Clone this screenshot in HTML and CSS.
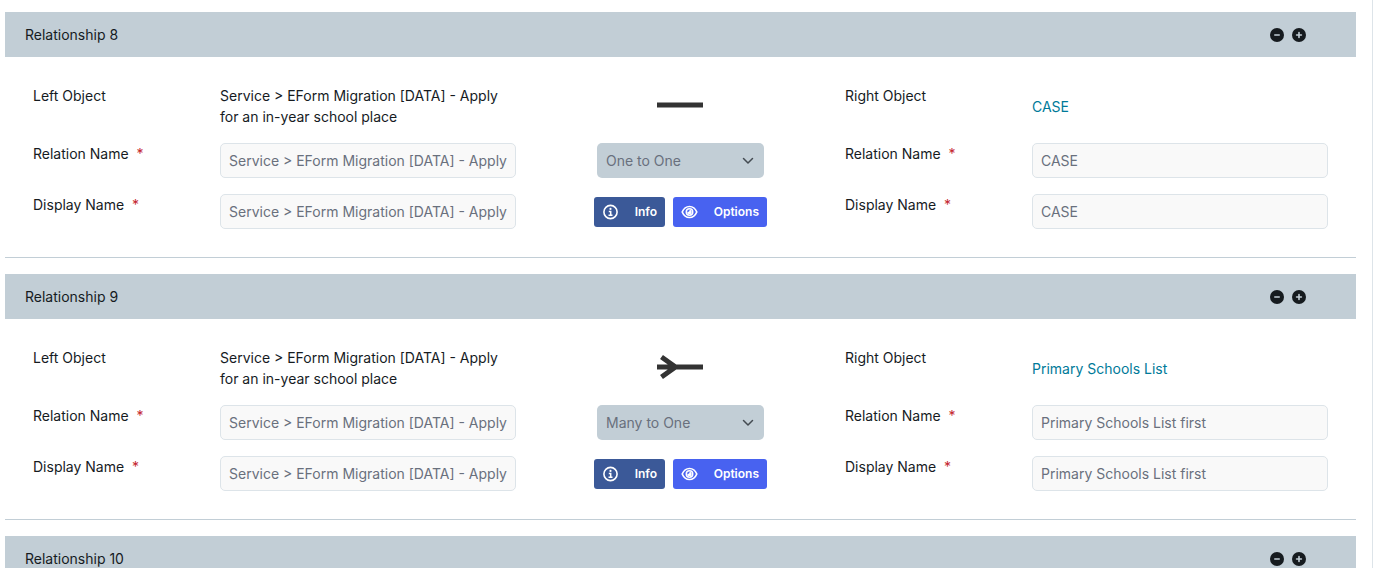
FILE: index.html
```
<!DOCTYPE html>
<html lang="en">
<head>
<meta charset="utf-8">
<title>Relationships</title>
<link rel="stylesheet" href="styles.css">
</head>
<body>
<svg class="sprite" aria-hidden="true">
  <symbol id="minus" viewBox="0 0 14 14"><circle cx="7" cy="7" r="7" fill="currentColor"/><path d="M4.8 7h4.4" stroke="#c2ced6" stroke-width="1.6" stroke-linecap="round"/></symbol>
  <symbol id="plus" viewBox="0 0 14 14"><circle cx="7" cy="7" r="7" fill="currentColor"/><path d="M4.6 7h4.8M7 4.6v4.8" stroke="#c2ced6" stroke-width="1.6" stroke-linecap="round"/></symbol>
  <symbol id="info" viewBox="0 0 16 16"><circle cx="8" cy="8" r="6.6" fill="none" stroke="currentColor" stroke-width="1.6"/><circle cx="8" cy="4.9" r="1.1" fill="currentColor"/><path d="M6.3 7.6h1.9v3.6M6 11.2h4" fill="none" stroke="currentColor" stroke-width="1.5"/></symbol>
  <symbol id="eye" viewBox="0 0 17 16"><path d="M1.200 8C2.700 4.500 5.300 2.500 8.500 2.500S14.300 4.500 15.800 8c-1.500 3.500-4.100 5.500-7.300 5.500S2.700 11.500 1.200 8z" fill="none" stroke="currentColor" stroke-width="1.700" stroke-linejoin="round"/><circle cx="8.500" cy="8" r="3.200" fill="none" stroke="currentColor" stroke-width="1.600"/><path d="M8.500 5.800A2.200 2.200 0 1 1 6.300 8C7.700 8.300 8.800 7.300 8.500 5.800z" fill="currentColor"/></symbol>
</svg>
<main class="panel">
  <section class="relationship">
    <header class="bar">
      <h2 class="title">Relationship 8</h2>
      <button class="toggle" type="button" aria-label="Collapse"><svg class="dot"><use href="#minus"/></svg></button>
      <button class="toggle" type="button" aria-label="Expand"><svg class="dot"><use href="#plus"/></svg></button>
    </header>
    <div class="fields">
      <span>Left Object</span>
      <span>Service &gt; EForm Migration [DATA] - Apply for an in-year school place</span>
      <svg class="link-shape" viewBox="0 0 48 28"><path d="M0 13h46"/></svg>
      <span>Right Object</span>
      <a class="object-link" href="#case">CASE</a>

      <label for="l-rel-8">Relation Name <span class="required">*</span></label>
      <input class="text" id="l-rel-8" value="Service &gt; EForm Migration [DATA] - Apply for an in-year school place">
      <select class="kind" aria-label="Relationship type"><option>One to One</option><option>Many to One</option></select>
      <label for="r-rel-8">Relation Name <span class="required">*</span></label>
      <input class="text" id="r-rel-8" value="CASE">

      <label for="l-dis-8">Display Name <span class="required">*</span></label>
      <input class="text" id="l-dis-8" value="Service &gt; EForm Migration [DATA] - Apply for an in-year school place">
      <div class="actions">
        <button class="action info" type="button"><svg class="icon"><use href="#info"/></svg>Info</button>
        <button class="action options" type="button"><svg class="icon"><use href="#eye"/></svg>Options</button>
      </div>
      <label for="r-dis-8">Display Name <span class="required">*</span></label>
      <input class="text" id="r-dis-8" value="CASE">
    </div>
  </section>

  <section class="relationship">
    <header class="bar">
      <h2 class="title">Relationship 9</h2>
      <button class="toggle" type="button" aria-label="Collapse"><svg class="dot"><use href="#minus"/></svg></button>
      <button class="toggle" type="button" aria-label="Expand"><svg class="dot"><use href="#plus"/></svg></button>
    </header>
    <div class="fields">
      <span>Left Object</span>
      <span>Service &gt; EForm Migration [DATA] - Apply for an in-year school place</span>
      <svg class="link-shape" viewBox="0 0 48 28"><path d="M0 13h46M4.500 3L18.500 13L4.500 23"/></svg>
      <span>Right Object</span>
      <a class="object-link" href="#primary-schools">Primary Schools List</a>

      <label for="l-rel-9">Relation Name <span class="required">*</span></label>
      <input class="text" id="l-rel-9" value="Service &gt; EForm Migration [DATA] - Apply for an in-year school place">
      <select class="kind" aria-label="Relationship type"><option>Many to One</option><option>One to One</option></select>
      <label for="r-rel-9">Relation Name <span class="required">*</span></label>
      <input class="text" id="r-rel-9" value="Primary Schools List first">

      <label for="l-dis-9">Display Name <span class="required">*</span></label>
      <input class="text" id="l-dis-9" value="Service &gt; EForm Migration [DATA] - Apply for an in-year school place">
      <div class="actions">
        <button class="action info" type="button"><svg class="icon"><use href="#info"/></svg>Info</button>
        <button class="action options" type="button"><svg class="icon"><use href="#eye"/></svg>Options</button>
      </div>
      <label for="r-dis-9">Display Name <span class="required">*</span></label>
      <input class="text" id="r-dis-9" value="Primary Schools List first">
    </div>
  </section>

  <section class="relationship">
    <header class="bar">
      <h2 class="title">Relationship 10</h2>
      <button class="toggle" type="button" aria-label="Collapse"><svg class="dot"><use href="#minus"/></svg></button>
      <button class="toggle" type="button" aria-label="Expand"><svg class="dot"><use href="#plus"/></svg></button>
    </header>
  </section>
</main>
</body>
</html>
```
FILE: styles.css
```
* { box-sizing: border-box; }

html { height: 100%; }

body {
  height: 100%;
  margin: 0;
  padding-right: 1px;
  overflow: hidden;
  background: #fff;
  color: #161b1f;
  font: 14px/21px Inter, "Liberation Sans", sans-serif;
}

.sprite { display: none; }

.panel {
  height: 100%;
  padding: 12px 16px 0 5px;
  border-right: 1px solid #dde4e9;
  overflow: hidden;
}

.relationship { margin-bottom: 16px; }

.bar {
  display: flex;
  align-items: center;
  gap: 8px;
  height: 45px;
  padding: 0 50px 0 20px;
  background: #c2ced6;
}

.title {
  flex: 1;
  margin: 0;
  font-size: 14px;
  font-weight: 400;
}

.toggle {
  display: flex;
  padding: 0;
  border: 0;
  background: none;
  color: #161b1f;
}

.dot { width: 14px; height: 14px; }

.fields {
  display: grid;
  grid-template-columns: 187fr 296fr 329fr 187fr 296fr;
  row-gap: 16px;
  padding: 28px;
  border-bottom: 1px solid #c2ced6;
}

.required {
  margin-left: 4px;
  color: #c4262e;
}

.link-shape {
  place-self: center;
  width: 48px;
  height: 28px;
  fill: none;
  stroke: #333;
  stroke-width: 5;
}

.object-link {
  align-self: center;
  color: #007a99;
  text-decoration: none;
}

.text {
  width: 100%;
  min-width: 0;
  height: 35px;
  padding: 0 8px;
  border: 1px solid #dde4e9;
  border-radius: 5px;
  background: #f9f9f9;
  color: #69707d;
  font: inherit;
}

.kind {
  justify-self: center;
  appearance: none;
  width: 167px;
  height: 35px;
  padding: 0 32px 0 9px;
  border: 0;
  border-radius: 5px;
  background: #c2ced6 url("data:image/svg+xml,%3Csvg xmlns='http://www.w3.org/2000/svg' viewBox='0 0 12 8'%3E%3Cpath d='M1.500 1.500L6 6l4.500-4.500' fill='none' stroke='%23444b52' stroke-width='1.500' stroke-linecap='round' stroke-linejoin='round'/%3E%3C/svg%3E") no-repeat right 10px center / 12px 8px;
  color: #69707d;
  font: inherit;
}

.actions {
  display: flex;
  align-items: center;
  justify-content: center;
  gap: 8px;
}

.action {
  display: flex;
  align-items: center;
  justify-content: space-between;
  height: 30px;
  padding: 0 8px;
  border: 0;
  border-radius: 3px;
  color: #fff;
  font: 600 12px/18px Inter, "Liberation Sans", sans-serif;
}

.info { width: 71px; background: #3b5998; }

.options { width: 94px; background: #4862f0; }

.icon { width: 17px; height: 16px; }
```
